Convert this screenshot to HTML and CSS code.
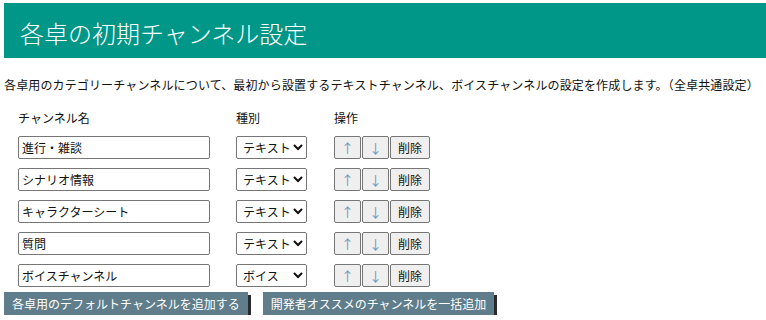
FILE: index.html
```html
<!DOCTYPE html>
<html lang="ja">
<head>
<meta charset="utf-8">
<link rel="stylesheet" href="styles.css">
</head>
<body>
<header class="title-bar"><h1>各卓の初期チャンネル設定</h1></header>
<p class="desc">各卓用のカテゴリーチャンネルについて、最初から設置するテキストチャンネル、ボイスチャンネルの設定を作成します。（全卓共通設定）</p>
<div class="table">
  <div class="row head">
    <div class="c-name">チャンネル名</div>
    <div class="c-type">種別</div>
    <div class="c-ops">操作</div>
  </div>
  <div class="row">
    <div class="c-name"><input class="name-input" type="text" value="進行・雑談"></div>
    <div class="c-type"><select class="type-select"><option selected>テキスト</option><option>ボイス</option></select></div>
    <div class="c-ops"><button class="btn arrow">↑</button><button class="btn arrow">↓</button><button class="btn del">削除</button></div>
  </div>
  <div class="row">
    <div class="c-name"><input class="name-input" type="text" value="シナリオ情報"></div>
    <div class="c-type"><select class="type-select"><option selected>テキスト</option><option>ボイス</option></select></div>
    <div class="c-ops"><button class="btn arrow">↑</button><button class="btn arrow">↓</button><button class="btn del">削除</button></div>
  </div>
  <div class="row">
    <div class="c-name"><input class="name-input" type="text" value="キャラクターシート"></div>
    <div class="c-type"><select class="type-select"><option selected>テキスト</option><option>ボイス</option></select></div>
    <div class="c-ops"><button class="btn arrow">↑</button><button class="btn arrow">↓</button><button class="btn del">削除</button></div>
  </div>
  <div class="row">
    <div class="c-name"><input class="name-input" type="text" value="質問"></div>
    <div class="c-type"><select class="type-select"><option selected>テキスト</option><option>ボイス</option></select></div>
    <div class="c-ops"><button class="btn arrow">↑</button><button class="btn arrow">↓</button><button class="btn del">削除</button></div>
  </div>
  <div class="row">
    <div class="c-name"><input class="name-input" type="text" value="ボイスチャンネル"></div>
    <div class="c-type"><select class="type-select"><option>テキスト</option><option selected>ボイス</option></select></div>
    <div class="c-ops"><button class="btn arrow">↑</button><button class="btn arrow">↓</button><button class="btn del">削除</button></div>
  </div>
</div>
<div class="actions">
  <button class="action-btn">各卓用のデフォルトチャンネルを追加する</button>
  <button class="action-btn">開発者オススメのチャンネルを一括追加</button>
</div>
</body>
</html>
```
FILE: styles.css
```css
html, body {
  margin: 0;
  padding: 0;
  background: #ffffff;
  overflow: hidden;
}
body {
  padding: 3px 0 0 4px;
  font-family: "Noto Sans CJK JP", "Noto Sans", sans-serif;
  font-size: 12px;
  color: #111;
}
.title-bar {
  background: #009688;
  height: 55px;
  display: flex;
  align-items: center;
  padding-left: 16px;
}
.title-bar h1 {
  margin: 0;
  font-size: 24px;
  font-weight: 300;
  color: #fff;
  line-height: 1;
  position: relative;
  top: 2px;
}
.desc {
  margin: 20px 0 0 0;
  line-height: 13px;
  white-space: nowrap;
  letter-spacing: 0.14px;
}
.table {
  margin-top: 20px;
  padding-left: 14px;
  display: flex;
  flex-direction: column;
  gap: 9px;
}
.row {
  display: flex;
  align-items: center;
  height: 23px;
}
.row.head {
  height: 13px;
  line-height: 13px;
  margin-bottom: 3px;
}
.c-name { width: 218px; }
.c-type { width: 98px; }
.c-ops { display: flex; }
.name-input {
  box-sizing: border-box;
  width: 192px;
  height: 23px;
  border: 1px solid #767676;
  border-radius: 2px;
  padding: 0 3px;
  font-family: inherit;
  font-size: 12px;
  color: #111;
  margin: 0;
  outline: none;
}
.type-select {
  box-sizing: border-box;
  width: 71px;
  height: 23px;
  border: 1px solid #767676;
  border-radius: 2px;
  font-family: inherit;
  font-size: 12px;
  color: #111;
  background: #fff;
  margin: 0;
  padding: 0 0 0 2px;
}
.btn {
  box-sizing: border-box;
  height: 23px;
  margin: 0 1px 0 0;
  padding: 0;
  border: 1px solid #767676;
  border-radius: 2px;
  background: #efefef;
  font-family: inherit;
  font-size: 12px;
  color: #111;
}
.btn.arrow {
  width: 27px;
  color: #6f95c0;
  font-size: 13px;
}
.btn.del {
  width: 40px;
}
.actions {
  display: flex;
  gap: 15px;
  margin-top: 5px;
}
.action-btn {
  box-sizing: border-box;
  height: 23px;
  padding: 0 8px;
  border: none;
  border-radius: 0;
  background: #607d8b;
  color: #fff;
  font-family: inherit;
  font-size: 12px;
  box-shadow: 3px 3px 0 #2b2b2b;
  margin: 0;
}
```
